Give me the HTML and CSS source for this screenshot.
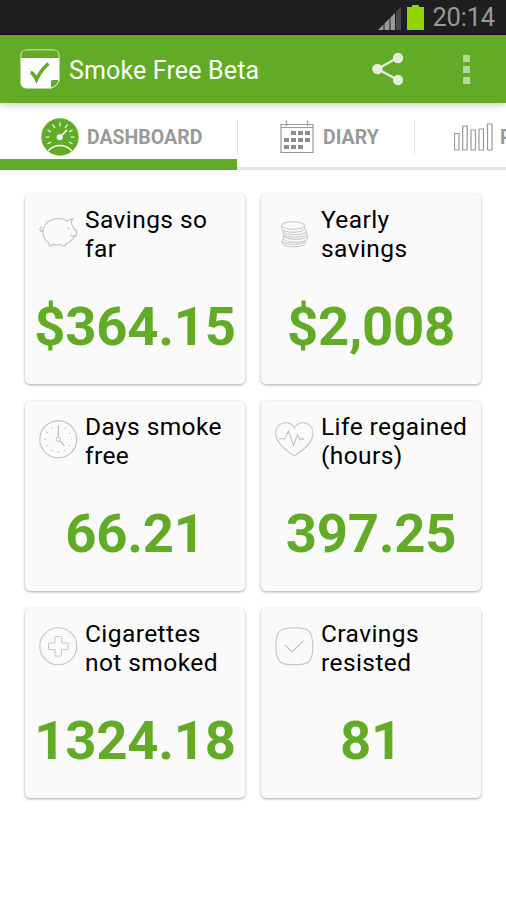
FILE: index.html
```html
<!DOCTYPE html>
<html lang="en">
<head>
    <meta charset="UTF-8">
    <meta name="viewport" content="width=device-width, initial-scale=1.0">
    <title>Smoke Free Beta</title>
    <link rel="stylesheet" href="styles.css">
</head>
<body>
    <div class="status-bar">
        <svg class="signal" width="23" height="23" viewBox="0 0 23 23">
            <path d="M0 23L5.5 17.5V23ZM6.5 16.5L11.5 11.5V23H6.5ZM12.5 10.5L17 6V23H12.5Z" fill="#999"/>
            <path d="M18 5L23 0V23H18Z" fill="#484848"/>
        </svg>
        <svg class="battery" width="17" height="25" viewBox="0 0 17 25">
            <path d="M5 0H12V2H17V25H0V2H5Z" fill="#94d400"/>
        </svg>
        <span class="clock">20:14</span>
    </div>

    <header class="action-bar">
        <svg class="logo" width="40" height="40" viewBox="0 0 40 40">
            <rect x="0.5" y="0.5" width="39" height="39" rx="6" fill="#fff"/>
            <path d="M1.3 9V6.5Q1.3 1.2 6.5 1.2H33.5Q38.7 1.2 38.7 6.5V9Z" fill="#62ab26"/>
            <path d="M10.5 23.5Q13.5 24 16.5 30.5Q21 21 28.5 14.5" fill="none" stroke="#62ab26" stroke-width="3.6"/>
            <path d="M30.5 40L40 31V40Z" fill="#62ab26"/>
            <path d="M30.5 39.2V32.5Q30.5 30.5 33 30.5H39.2Q37.5 37.5 30.5 39.2Z" fill="#62ab26" stroke="#fff"/>
        </svg>
        <h1>Smoke Free Beta</h1>
        <svg class="share" width="32" height="34" viewBox="0 0 32 34">
            <g fill="#e3f0d9">
                <path d="M26 5.5L5.5 17L26 28" fill="none" stroke="#e3f0d9" stroke-width="2.4"/>
                <circle cx="26" cy="6" r="5.2"/>
                <circle cx="5.4" cy="17" r="5.2"/>
                <circle cx="26" cy="28" r="5.2"/>
            </g>
        </svg>
        <div class="overflow"><i></i><i></i><i></i></div>
    </header>

    <nav class="tabs">
        <div class="tab tab-dashboard active">
            <svg width="38" height="38" viewBox="0 0 38 38">
                <circle cx="19" cy="19" r="18.7" fill="#62ab26"/>
                <g stroke="#fff" fill="none">
                    <path d="M4.5 19H8.5M29.5 19H33.5M19 4.5V8.5M6.5 26L9.8 24M31.5 26L28.2 24M6.5 12L9.8 14M31.5 12L28.2 14M11.7 6.5L13.8 10M26.3 6.5L24.2 10" stroke-width="1.2"/>
                    <path d="M19 19L26 12" stroke-width="1.6"/>
                    <path d="M7 33Q12 27.5 19 27.5T31 33" stroke-width="1.3"/>
                </g>
                <circle cx="18.7" cy="19.3" r="3" fill="#fff"/>
            </svg>
            <span>DASHBOARD</span>
        </div>
        <div class="tab tab-diary">
            <svg width="34" height="34" viewBox="0 0 34 34">
                <path d="M1 4.5H33V32.5H1ZM1 7.5H33M6.5 0.5V6M27.5 0.5V6" fill="none" stroke="#999" stroke-width="1.2"/>
                <path d="M11 11h5v4h-5zM18 11h5v4h-5zM25 11h5v4h-5zM4 18h5v4h-5zM11 18h5v4h-5zM18 18h5v4h-5zM25 18h5v4h-5zM4 25h5v4h-5zM11 25h5v4h-5zM18 25h5v4h-5z" fill="#8c8c8c"/>
            </svg>
            <span>DIARY</span>
        </div>
        <div class="tab tab-progress">
            <svg width="39" height="28" viewBox="0 0 39 28">
                <path d="M0.5 10.5H5V27H0.5ZM8.7 3H13.2V27H8.7ZM17 7H21.5V27H17ZM25 6H29.5V27H25ZM33.5 1H38V27H33.5Z" fill="none" stroke="#999" stroke-width="1.2"/>
            </svg>
            <span>P</span>
        </div>
    </nav>

    <main class="cards">
        <section class="card">
            <div class="card-head">
                <svg class="icon" width="40" height="40" viewBox="0 0 40 40">
                    <path d="M4 16Q8 5.5 20 5.5Q25 5.5 28 8Q31 6 34 6Q31 8.5 33 12Q34.5 14 35.5 17L37.5 17.5Q38.5 23 35 24Q31 30 27 30.5L26 33H23.5L22 31.5Q17 32.5 13.5 31.5L12.5 33H10.5L9.5 29.5Q2.5 25 4 16M4 18.5Q0.5 18.5 1 15.5L3 13.5" fill="none" stroke="#bebebe" stroke-width="1.1"/>
                    <path d="M31 22Q33 24 36 22.5" fill="none" stroke="#bebebe"/>
                    <circle cx="29.5" cy="15.5" r="0.8" fill="#bbb"/>
                </svg>
                <h2>Savings so far</h2>
            </div>
            <p class="value">$364.15</p>
        </section>
        <section class="card">
            <div class="card-head">
                <svg class="icon" width="40" height="40" viewBox="0 0 40 40">
                    <g fill="#fafafa" stroke="#c4c4c4">
                        <path d="M7 27.5V30C7 35 30.5 35 30.5 30V27.5"/>
                        <ellipse cx="18.8" cy="27.5" rx="11.7" ry="3.8"/>
                        <path d="M8.5 22.5V25.5C8.5 30.5 32.5 30.5 32.5 25.5V22.5"/>
                        <ellipse cx="20.5" cy="22.5" rx="12" ry="3.8"/>
                        <path d="M8 18V20.5C8 25.5 31.5 25.5 31.5 20.5V18"/>
                        <ellipse cx="19.7" cy="18" rx="11.7" ry="3.8"/>
                        <path d="M6.5 12.5V15.5C6.5 20.5 29.5 20.5 29.5 15.5V12.5"/>
                        <ellipse cx="18" cy="12.5" rx="11.5" ry="3.8"/>
                    </g>
                </svg>
                <h2>Yearly savings</h2>
            </div>
            <p class="value">$2,008</p>
        </section>
        <section class="card">
            <div class="card-head">
                <svg class="icon" width="40" height="40" viewBox="0 0 40 40">
                    <circle cx="19.3" cy="19.3" r="18.5" fill="none" stroke="#c4c4c4" stroke-width="1.2"/>
                    <circle cx="19.3" cy="19.3" r="13" fill="none" stroke="#c4c4c4" stroke-width="1.4" stroke-dasharray="1.3 5.507" stroke-dashoffset="0.65"/>
                    <path d="M19.3 17.2V6M20.8 20.8L25.5 25.5" stroke="#bbb" stroke-width="1.2"/>
                    <circle cx="19.3" cy="19.3" r="2.2" fill="#fafafa" stroke="#bbb"/>
                </svg>
                <h2>Days smoke free</h2>
            </div>
            <p class="value">66.21</p>
        </section>
        <section class="card">
            <div class="card-head">
                <svg class="icon" width="40" height="40" viewBox="0 0 40 40">
                    <g fill="none" stroke="#c4c4c4" stroke-width="1.1">
                        <path d="M19.3 35.8C10 30 0.8 23 0.8 13.5C0.8 1.5 15.5 -0.5 19.3 8C23.1 -0.5 37.9 1.5 37.9 13.5C37.9 23 28.5 30 19.3 35.8Z"/>
                        <path d="M4 18.8H10L13.5 11L18.5 25.5L22.5 14.5L25 20L26.5 18.5"/>
                    </g>
                    <circle cx="27.7" cy="18.7" r="1.3" fill="#c4c4c4"/>
                </svg>
                <h2>Life regained (hours)</h2>
            </div>
            <p class="value">397.25</p>
        </section>
        <section class="card">
            <div class="card-head">
                <svg class="icon" width="40" height="40" viewBox="0 0 40 40">
                    <circle cx="19.3" cy="19.3" r="18.5" fill="none" stroke="#c4c4c4" stroke-width="1.1"/>
                    <path d="M17 9.5H21.6Q22.6 9.5 22.6 10.5V16H28.1Q29.1 16 29.1 17V21.6Q29.1 22.6 28.1 22.6H22.6V28.1Q22.6 29.1 21.6 29.1H17Q16 29.1 16 28.1V22.6H10.5Q9.5 22.6 9.5 21.6V17Q9.5 16 10.5 16H16V10.5Q16 9.5 17 9.5Z" fill="none" stroke="#c4c4c4"/>
                </svg>
                <h2>Cigarettes not smoked</h2>
            </div>
            <p class="value">1324.18</p>
        </section>
        <section class="card">
            <div class="card-head">
                <svg class="icon" width="40" height="40" viewBox="0 0 40 40">
                    <path d="M19.3 0.8C32 0.8 37.8 2 37.8 19.3C37.8 36.6 32 37.8 19.3 37.8C6.6 37.8 0.8 36.6 0.8 19.3C0.8 2 6.6 0.8 19.3 0.8Z" fill="none" stroke="#c4c4c4" stroke-width="1.1"/>
                    <path d="M10 18L17 25L28.5 14" fill="none" stroke="#c4c4c4" stroke-width="1.1"/>
                </svg>
                <h2>Cravings resisted</h2>
            </div>
            <p class="value">81</p>
        </section>
    </main>
</body>
</html>
```
FILE: styles.css
```css
* {
    box-sizing: border-box;
}
body {
    margin: 0;
    background: #fff;
    font-family: Roboto, sans-serif;
    overflow: hidden;
}
svg {
    display: block;
    flex: none;
}
.status-bar {
    display: flex;
    justify-content: flex-end;
    height: 35px;
    padding: 5px 11px 0 0;
    background: #1f1f1f;
    border-bottom: 1px solid #160a20;
}
.signal {
    margin: 2px 6px 0 0;
}
.battery {
    margin-right: 8px;
}
.clock {
    font-size: 25.5px;
    line-height: 25px;
    letter-spacing: -0.2px;
    color: #999;
}
.action-bar {
    position: relative;
    display: flex;
    align-items: center;
    height: 68px;
    padding: 0 36px 0 20px;
    background: #62ab26;
    box-shadow: 0 1px 8px rgba(0, 0, 0, 0.25);
}
.action-bar h1 {
    flex: 1;
    margin: 2px 0 0 9px;
    font-size: 25px;
    font-weight: 400;
    letter-spacing: 0.15px;
    color: #fff;
}
.share {
    margin-right: 59px;
}
.overflow {
    display: flex;
    flex-direction: column;
    gap: 4px;
}
.overflow i {
    width: 7px;
    height: 7px;
    background: #b3d897;
}
.tabs {
    display: flex;
    height: 67px;
    overflow: hidden;
    box-shadow: inset 0 -3px #e3e3e3;
}
.tab {
    position: relative;
    display: flex;
    flex: none;
    align-items: center;
    height: 67px;
    font-size: 19.5px;
    font-weight: 700;
    color: #999;
}
.tab span {
    padding-top: 2px;
}
.tab + .tab::before {
    content: "";
    position: absolute;
    left: 0;
    top: 17px;
    width: 1px;
    height: 34px;
    background: #e0e0e0;
}
.tab-dashboard {
    width: 237px;
    padding-left: 41px;
    gap: 8px;
}
.tab-diary {
    width: 177px;
    padding-left: 43px;
    gap: 9px;
}
.tab-progress {
    padding-left: 40px;
    gap: 7px;
}
.tab.active {
    border-bottom: 11px solid #62ab26;
    padding-top: 11px;
}
.cards {
    display: grid;
    grid-template-columns: 220px 220px;
    grid-auto-rows: 190px;
    gap: 17px 16px;
    padding: 24px 25px;
}
.card {
    background: #fafafa;
    border-radius: 5px;
    box-shadow: 0 1px 3px rgba(0, 0, 0, 0.35);
}
.card-head {
    display: flex;
    height: 102px;
    padding: 11px 12px 0 14px;
}
.icon {
    margin-top: 8px;
}
.card h2 {
    margin: 0 0 0 6px;
    font-size: 24.5px;
    font-weight: 400;
    line-height: 29.3px;
    letter-spacing: 0.42px;
    color: #000;
}
.value {
    margin: 0;
    font-size: 54.5px;
    font-weight: 700;
    line-height: 60px;
    letter-spacing: -0.3px;
    text-align: center;
    color: #62ab26;
}
```
